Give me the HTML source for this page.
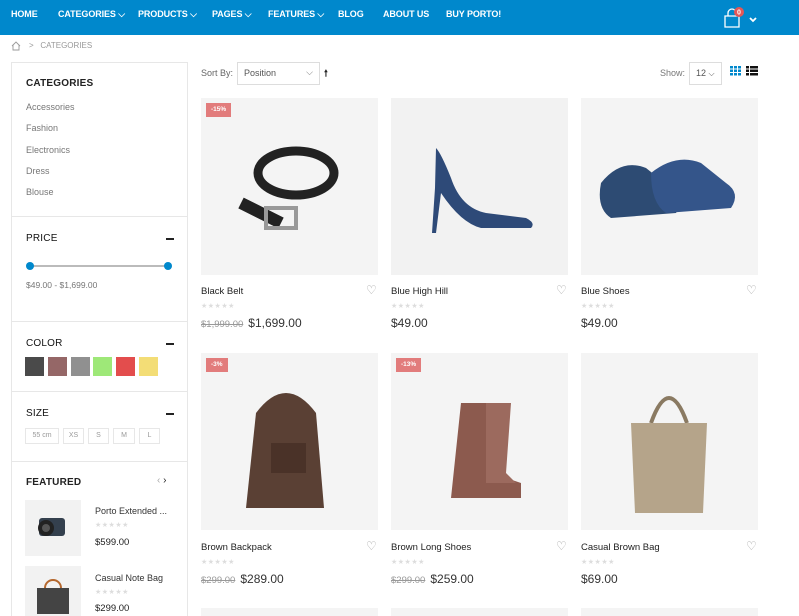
<!DOCTYPE html>
<html><head><meta charset="utf-8"><style>
*{box-sizing:border-box;margin:0;padding:0}
html,body{width:799px;height:616px;overflow:hidden}
body{background:#fff;font-family:"Liberation Sans",sans-serif;color:#222;position:relative}
.nav{position:absolute;left:0;top:0;width:799px;height:35px;background:#0088cc}
.nav span{position:absolute;top:9px;color:#fff;font-size:9px;font-weight:bold;letter-spacing:-.1px}
.a{position:absolute}
.side{position:absolute;left:11px;top:62px;width:177px;height:554px;border:1px solid #e7e7e7;border-bottom:none;overflow:hidden}
.hr{position:absolute;left:0;width:175px;height:1px;background:#e7e7e7}
.h{position:absolute;left:14px;font-size:10px;font-weight:bold;color:#222;letter-spacing:.2px}
.cat{position:absolute;left:14px;font-size:9px;color:#777}
.minus{position:absolute;left:154px;width:8px;height:1.5px;background:#222}
.sw{position:absolute;top:357px;width:19px;height:19px}
.sz{position:absolute;top:428px;height:16px;border:1px solid #e7e7e7;font-size:7px;color:#999;text-align:center;line-height:14px}
.img{position:absolute;width:177px;height:177px;background:#f4f4f4;overflow:hidden}
.badge{position:absolute;left:5px;top:5px;height:14px;padding:0 5px;background:#e27c7c;color:#fff;font-size:6.5px;font-weight:bold;line-height:14px}
.nm{position:absolute;font-size:9.5px;color:#222}
.st{position:absolute;font-size:7px;color:#ddd;letter-spacing:.5px}
.pr{position:absolute;font-size:12px;color:#333}
.old{font-size:9.5px;color:#999;text-decoration:line-through;margin-right:5px}
.heart{position:absolute;font-size:12px;color:#aaa}
</style></head><body>
<div class="nav">
<span style="left:11px">HOME</span>
<span style="left:58px">CATEGORIES ⌵</span>
<span style="left:138px">PRODUCTS ⌵</span>
<span style="left:212px">PAGES ⌵</span>
<span style="left:268px">FEATURES ⌵</span>
<span style="left:338px">BLOG</span>
<span style="left:383px">ABOUT US</span>
<span style="left:446px">BUY PORTO!</span>
<svg class="a" style="left:723px;top:7px" width="40" height="22"><path d="M2 9h14v11H2z M5 9V6a4 4 0 0 1 8 0v3" fill="none" stroke="#fff" stroke-width="1.3"/><circle cx="16" cy="5" r="5" fill="#e25757"/><text x="16" y="7.5" font-size="7" fill="#fff" text-anchor="middle" font-family="Liberation Sans" font-weight="bold">0</text><path d="M27 11l3 3 3-3" fill="none" stroke="#fff" stroke-width="1.8"/></svg>
</div>
<svg class="a" style="left:11px;top:41px" width="10" height="10"><path d="M1 5L5 1l4 4M2 4v5h6V4" fill="none" stroke="#999" stroke-width=".9"/></svg>
<div class="a" style="left:29px;top:41px;font-size:8px;color:#999">&gt;&nbsp;&nbsp; CATEGORIES</div>

<div class="side">
<div class="h" style="top:15px">CATEGORIES</div>
<div class="cat" style="top:39px">Accessories</div>
<div class="cat" style="top:60px">Fashion</div>
<div class="cat" style="top:82px">Electronics</div>
<div class="cat" style="top:103px">Dress</div>
<div class="cat" style="top:124px">Blouse</div>
<div class="hr" style="top:153px"></div>
<div class="h" style="top:170px;font-weight:normal;color:#111">PRICE</div><div class="minus" style="top:175px"></div>
<div class="a" style="left:17px;top:202px;width:140px;height:2px;background:#bbb"></div>
<div class="a" style="left:14px;top:199px;width:8px;height:8px;border-radius:50%;background:#0088cc"></div>
<div class="a" style="left:152px;top:199px;width:8px;height:8px;border-radius:50%;background:#0088cc"></div>
<div class="cat" style="top:217px;font-size:8.5px">$49.00 - $1,699.00</div>
<div class="hr" style="top:258px"></div>
<div class="h" style="top:275px;font-weight:normal;color:#111">COLOR</div><div class="minus" style="top:280px"></div>
<div class="hr" style="top:328px"></div>
<div class="h" style="top:345px;font-weight:normal;color:#111">SIZE</div><div class="minus" style="top:350px"></div>
<div class="hr" style="top:398px"></div>
<div class="h" style="top:414px">FEATURED</div>
<div class="a" style="left:145px;top:412px;font-size:10px;color:#aaa">‹ <span style="color:#222">›</span></div>
<div class="a" style="left:13px;top:437px;width:56px;height:56px;background:#f2f2f2"><svg width="56" height="56"><rect x="14" y="18" width="26" height="18" rx="3" fill="#34404e"/><circle cx="21" cy="28" r="8" fill="#222"/><circle cx="21" cy="28" r="4" fill="#555"/></svg></div>
<div class="a" style="left:83px;top:443px;font-size:9px;color:#333">Porto Extended ...</div>
<div class="st" style="left:83px;top:458px">★★★★★</div>
<div class="a" style="left:83px;top:474px;font-size:9.5px;color:#222">$599.00</div>
<div class="a" style="left:13px;top:503px;width:56px;height:56px;background:#f2f2f2"><svg width="56" height="56"><path d="M20 22a8 8 0 0 1 16 0" fill="none" stroke="#b5682e" stroke-width="2"/><rect x="12" y="22" width="32" height="26" fill="#444"/></svg></div>
<div class="a" style="left:83px;top:510px;font-size:9px;color:#333">Casual Note Bag</div>
<div class="st" style="left:83px;top:525px">★★★★★</div>
<div class="a" style="left:83px;top:540px;font-size:9.5px;color:#222">$299.00</div>
</div>
<div class="sw" style="left:25px;background:#4a4a4a"></div>
<div class="sw" style="left:48px;background:#956767"></div>
<div class="sw" style="left:71px;background:#909090"></div>
<div class="sw" style="left:93px;background:#9ee878"></div>
<div class="sw" style="left:116px;background:#e34d4d"></div>
<div class="sw" style="left:139px;background:#f3dd76"></div>
<div class="sz" style="left:25px;width:34px">55 cm</div>
<div class="sz" style="left:63px;width:21px">XS</div>
<div class="sz" style="left:88px;width:21px">S</div>
<div class="sz" style="left:113px;width:22px">M</div>
<div class="sz" style="left:139px;width:21px">L</div>

<div class="a" style="left:201px;top:68px;font-size:9px;color:#666">Sort By:</div>
<div class="a" style="left:237px;top:62px;width:83px;height:23px;border:1px solid #ddd;font-size:9px;color:#555;padding:5px 6px">Position<span style="position:absolute;right:6px;top:4px;color:#777">⌵</span></div>
<div class="a" style="left:324px;top:66px;font-size:9px;font-weight:bold">🠕</div>
<div class="a" style="left:660px;top:68px;font-size:9px;color:#777">Show:</div>
<div class="a" style="left:689px;top:62px;width:33px;height:23px;border:1px solid #ddd;font-size:9px;color:#555;padding:5px 6px">12 <span style="font-size:8px">⌵</span></div>
<svg class="a" style="left:730px;top:66px" width="28" height="10"><g fill="#0088cc"><rect x="0" y="0" width="3" height="2.5"/><rect x="4" y="0" width="3" height="2.5"/><rect x="8" y="0" width="3" height="2.5"/><rect x="0" y="3.5" width="3" height="2.5"/><rect x="4" y="3.5" width="3" height="2.5"/><rect x="8" y="3.5" width="3" height="2.5"/><rect x="0" y="7" width="3" height="2.5"/><rect x="4" y="7" width="3" height="2.5"/><rect x="8" y="7" width="3" height="2.5"/></g><g fill="#111"><rect x="16" y="0" width="3" height="2.5"/><rect x="20" y="0" width="8" height="2.5"/><rect x="16" y="3.5" width="3" height="2.5"/><rect x="20" y="3.5" width="8" height="2.5"/><rect x="16" y="7" width="3" height="2.5"/><rect x="20" y="7" width="8" height="2.5"/></g></svg>

<div class="img" style="left:201px;top:98px"><div class="badge">-15%</div><svg width="177" height="177"><ellipse cx="95" cy="75" rx="38" ry="22" fill="none" stroke="#222" stroke-width="9"/><path d="M40 105l40 20" stroke="#222" stroke-width="12"/><rect x="65" y="110" width="30" height="20" fill="none" stroke="#999" stroke-width="4"/></svg></div>
<div class="img" style="left:391px;top:98px;background:#f2f2f2"><svg width="177" height="177"><path d="M45 50q5 5 15 30q10 30 35 35l40 5q10 5 5 10l-50 0q-20 -5 -40 -35l-5 40h-4l3 -45z" fill="#2e4a78"/></svg></div>
<div class="img" style="left:581px;top:98px"><svg width="177" height="177"><path d="M20 85q20-25 45-15l25 20q15 10 5 25l-65 5q-15-10-10-35z" fill="#2d4b73"/><path d="M70 75q25-20 50-10l25 20q15 10 5 25l-65 5q-15-10-15-40z" fill="#34558a"/></svg></div>
<div class="nm" style="left:201px;top:286px">Black Belt</div><div class="heart" style="left:366px;top:283px">♡</div>
<div class="st" style="left:201px;top:302px">★★★★★</div>
<div class="pr" style="left:201px;top:316px"><span class="old">$1,999.00</span>$1,699.00</div>
<div class="nm" style="left:391px;top:286px">Blue High Hill</div><div class="heart" style="left:556px;top:283px">♡</div>
<div class="st" style="left:391px;top:302px">★★★★★</div>
<div class="pr" style="left:391px;top:316px">$49.00</div>
<div class="nm" style="left:581px;top:286px">Blue Shoes</div><div class="heart" style="left:746px;top:283px">♡</div>
<div class="st" style="left:581px;top:302px">★★★★★</div>
<div class="pr" style="left:581px;top:316px">$49.00</div>

<div class="img" style="left:201px;top:353px"><div class="badge">-3%</div><svg width="177" height="177"><path d="M55 60q30-40 60 0l8 95h-78z" fill="#5a4034"/><rect x="70" y="90" width="35" height="30" fill="#4a3228"/></svg></div>
<div class="img" style="left:391px;top:353px"><div class="badge">-13%</div><svg width="177" height="177"><path d="M70 50h25l5 70l30 10v15h-70z" fill="#8c5a4e"/><path d="M95 50h25l-5 70l10 10h-30z" fill="#9c6a5e"/></svg></div>
<div class="img" style="left:581px;top:353px"><svg width="177" height="177"><path d="M70 70q18-50 36 0" fill="none" stroke="#8a7a62" stroke-width="4"/><path d="M50 70h76l-4 90h-68z" fill="#b5a48a"/></svg></div>
<div class="nm" style="left:201px;top:542px">Brown Backpack</div><div class="heart" style="left:366px;top:539px">♡</div>
<div class="st" style="left:201px;top:558px">★★★★★</div>
<div class="pr" style="left:201px;top:572px"><span class="old">$299.00</span>$289.00</div>
<div class="nm" style="left:391px;top:542px">Brown Long Shoes</div><div class="heart" style="left:556px;top:539px">♡</div>
<div class="st" style="left:391px;top:558px">★★★★★</div>
<div class="pr" style="left:391px;top:572px"><span class="old">$299.00</span>$259.00</div>
<div class="nm" style="left:581px;top:542px">Casual Brown Bag</div><div class="heart" style="left:746px;top:539px">♡</div>
<div class="st" style="left:581px;top:558px">★★★★★</div>
<div class="pr" style="left:581px;top:572px">$69.00</div>

<div class="img" style="left:201px;top:608px;height:8px"></div>
<div class="img" style="left:391px;top:608px;height:8px"></div>
<div class="img" style="left:581px;top:608px;height:8px"></div>
</body></html>
